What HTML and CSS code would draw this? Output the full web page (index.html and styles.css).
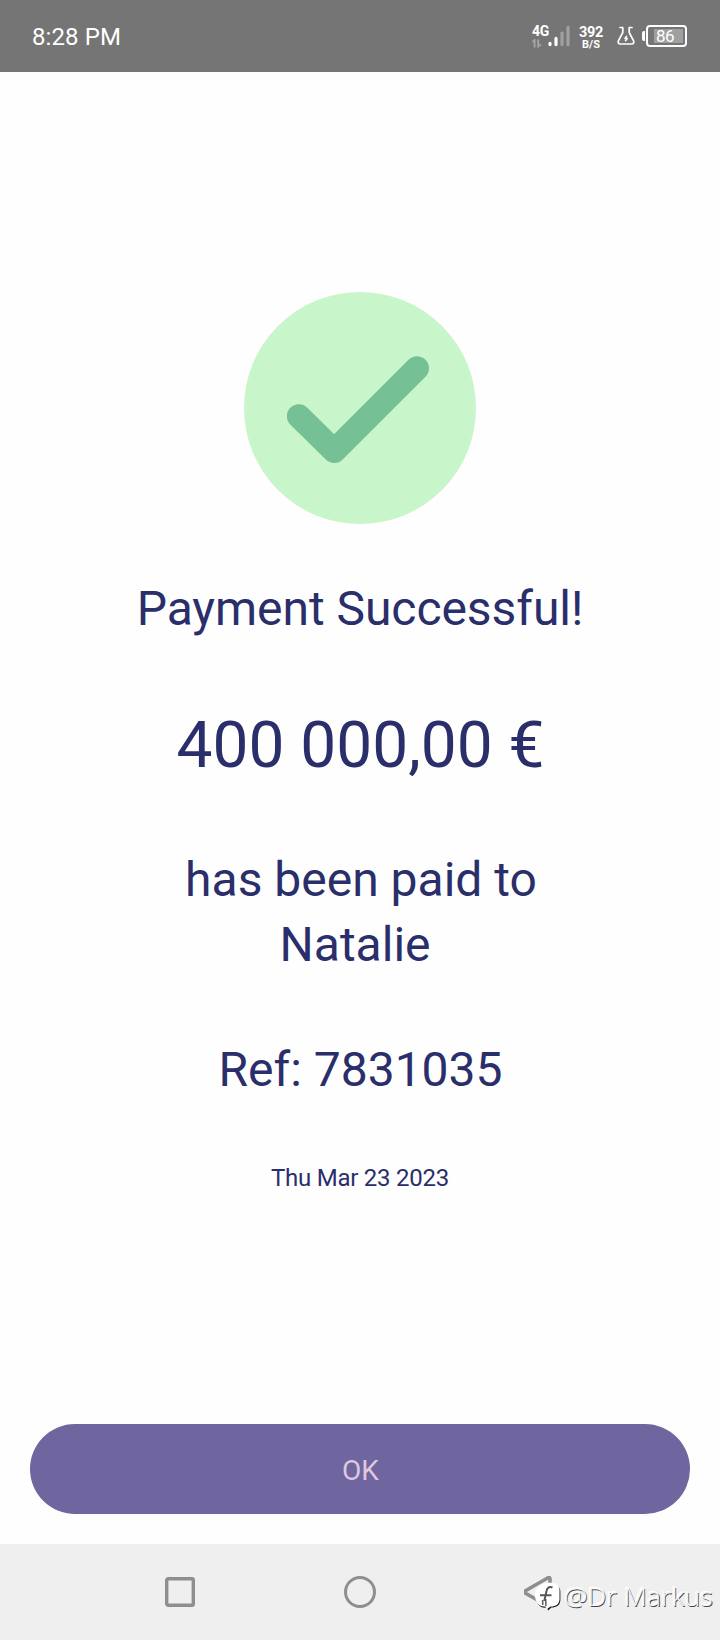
FILE: index.html
```html
<!DOCTYPE html>
<html lang="en">
<head>
<meta charset="utf-8">
<title>Payment Successful</title>
<link rel="stylesheet" href="styles.css">
</head>
<body>
<div class="screen">
  <header class="status">
    <span class="clock">8:28 PM</span>
    <div class="indicators">
      <div class="network">
        <span class="gen">4G</span>
        <svg class="updown" width="10" height="9" viewBox="0 0 10 9"><path d="M0.5 3 2.6 1V8.5M6.2 0.5V7.5L9 5.4" fill="none" stroke="#a6a6a6" stroke-width="1.8"/></svg>
      </div>
      <svg class="bars" width="22" height="22" viewBox="0 0 22 22" stroke-width="3.2" stroke-linecap="round">
        <path d="M2 18.4V19.6M8 13.4V19.6" stroke="#fff"/><path d="M14 8V19.6M20 2.4V19.6" stroke="#a0a0a0"/>
      </svg>
      <div class="speed"><span class="rate">392</span><span class="unit">B/S</span></div>
      <svg class="flask" width="18" height="20" viewBox="0 0 18 20" fill="none" stroke="#fff" stroke-width="1.7" stroke-linecap="round" stroke-linejoin="round">
        <path d="M3 1.5H5.8V6.5L1.4 14.8Q.6 18 3.2 18H14.8Q17.4 18 16.6 14.8L12.2 6.5V1.5H15"/><path d="M9.6 10.3 7.9 12.5H10.3L8.5 14.8" stroke-width="1.5"/>
      </svg>
      <div class="battery"><span class="level">86</span></div>
    </div>
  </header>
  <main class="receipt">
    <svg class="check" width="232" height="232" viewBox="0 0 232 232"><circle cx="116" cy="116" r="116" fill="#c8f6ca"/><path d="M54.9 124.2 90.2 159 173 76.2" fill="none" stroke="#75c195" stroke-width="24" stroke-linecap="round" stroke-linejoin="round"/></svg>
    <h1 class="title">Payment Successful!</h1>
    <p class="amount">400 000,00 €</p>
    <p class="payee">has been paid to<br>Natalie&nbsp;</p>
    <p class="reference">Ref: 7831035</p>
    <p class="date">Thu Mar 23 2023</p>
    <button class="ok">OK</button>
  </main>
  <nav class="navbar">
    <svg width="32" height="32" viewBox="0 0 32 32"><rect x="2.7" y="2.7" width="26.6" height="26.6" rx="1.5" fill="none" stroke="#8e8e8e" stroke-width="3.4"/></svg>
    <svg width="32" height="32" viewBox="0 0 32 32"><circle cx="16" cy="16" r="14.5" fill="none" stroke="#8e8e8e" stroke-width="3"/></svg>
    <svg width="32" height="32" viewBox="0 0 32 32"><path d="M24 1.8Q26 .8 26 3V29Q26 31 24 30L1.5 17.2Q-.2 16 1.5 14.8Z" fill="none" stroke="#8e8e8e" stroke-width="3.6"/></svg>
  </nav>
  <div class="watermark">
    <svg width="28" height="30" viewBox="0 0 28 30"><path d="M13 2C20 1 26 3 26 9V17C26 23 22 25 17 25L14 28 12 25C5 26 2 21 2 14S6 3 13 2Z" fill="#222" transform="translate(.4 .6)"/><path d="M13 1C20 0 25.5 2 25.5 8V17C25.5 22 22 24.5 16.5 24.5L13 27 11.5 24.5C5 25 1 20 1 13S6 2 13 1Z" fill="#fff"/><path d="M18.5 5.5C15 4 13 6 12.5 9L10.3 19M6 13.2H17.5" fill="none" stroke="#555" stroke-width="2"/><path d="M8.7 18V23M11.8 17V24" fill="none" stroke="#666" stroke-width="1.6"/></svg>
    <span class="handle">@Dr Markus</span>
  </div>
</div>
</body>
</html>
```

FILE: styles.css
```css
* { box-sizing: border-box; }
body { margin: 0; background: #fefefe; font-family: Roboto, "Liberation Sans", sans-serif; }
svg { display: block; flex: none; }
h1, p { margin: 0; font-weight: 400; }
.screen { position: relative; width: 720px; height: 1640px; display: flex; flex-direction: column; overflow: hidden; }
.status { height: 72px; padding: 0 33px 0 32px; display: flex; align-items: center; justify-content: space-between; background: #757575; color: #fff; }
.clock { font-size: 24px; line-height: 28px; padding-top: 2px; letter-spacing: 0.1px; }
.indicators { display: flex; align-items: center; height: 24px; }
.network { width: 16px; display: flex; flex-direction: column; }
.gen { font-size: 14px; line-height: 13px; font-weight: 700; letter-spacing: -0.3px; }
.updown { margin-top: 1px; }
.speed { margin-left: 8px; width: 26px; display: flex; flex-direction: column; align-items: center; font-weight: 700; }
.rate { font-size: 14.5px; line-height: 14px; letter-spacing: -0.3px; padding-top: 2px; }
.unit { font-size: 11px; line-height: 9px; }
.flask { margin: 0 8px 0 13px; }
.battery { position: relative; margin-left: 3px; width: 41px; height: 22px; border: 2px solid #fff; border-radius: 4px; padding: 2px; display: flex; }
.battery::before { content: ""; position: absolute; left: -6px; top: 4px; width: 3px; height: 10px; border-radius: 2px 0 0 2px; background: #fff; }
.level { width: 29px; height: 14px; margin-left: 4px; padding-left: 2px; background: #a0a0a0; font-size: 17px; line-height: 15px; letter-spacing: -0.5px; }
.receipt { flex: 1; padding: 220px 30px 30px; display: flex; flex-direction: column; align-items: center; color: #2a2e6a; text-align: center; }
.title { margin-top: 52px; font-size: 48px; line-height: 65px; letter-spacing: -0.05px; }
.amount { margin-top: 62px; padding-left: 1px; font-size: 64px; line-height: 86px; }
.payee { margin-top: 58px; padding-left: 2px; font-size: 48px; line-height: 65px; }
.reference { margin-top: 60px; padding-left: 1px; font-size: 48px; line-height: 65px; }
.date { margin-top: 60px; font-size: 24px; line-height: 32px; letter-spacing: -0.25px; }
.ok { margin-top: auto; width: 660px; height: 90px; border: 0; border-radius: 45px; padding: 4px 0 0 1px; background: #6f659f; color: #dec8df; font: 400 28px/32px Roboto, sans-serif; }
.navbar { height: 96px; padding: 0 164px; display: flex; align-items: center; justify-content: space-between; background: #efefef; }
.watermark { position: absolute; left: 534px; top: 1582px; display: flex; align-items: center; gap: 2px; }
.handle { margin-top: -3px; font-family: "Noto Sans", sans-serif; font-weight: 300; font-size: 26.5px; line-height: 30px; color: #f5f5f5; text-shadow: 0.8px 0.8px 0 #444, -1px -1px 0 #fff; white-space: nowrap; }
```
